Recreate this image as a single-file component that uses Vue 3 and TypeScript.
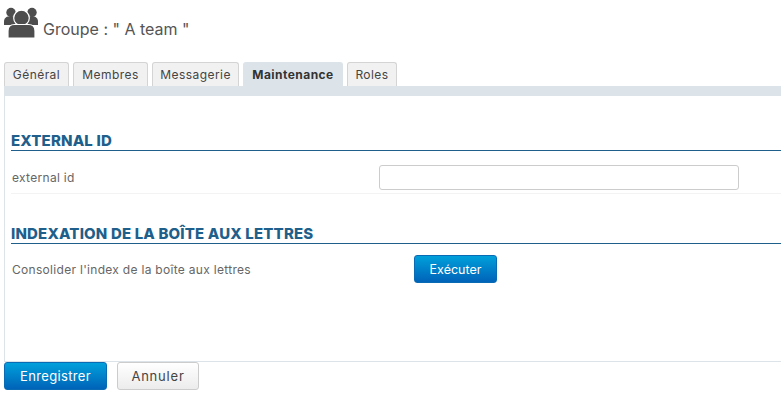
<script setup lang="ts">
const tabs = [
  { label: 'Général', width: 65 },
  { label: 'Membres', width: 75 },
  { label: 'Messagerie', width: 87 },
  { label: 'Maintenance', width: 100, active: true },
  { label: 'Roles', width: 50 }
]
</script>

<template>
  <div class="page">
    <header class="title">
      <svg class="icon" width="34" height="31" viewBox="0 0 34 31" fill="#4d4d4d">
        <circle cx="7" cy="5.500" r="4.700" />
        <circle cx="28" cy="5.500" r="4.700" />
        <path d="M0 18v-3.500c0-3 2-5 5-5h5c3 0 5 2 5 5V18z" />
        <path d="M20 18v-3.500c0-3 2-5 5-5h4c3 0 5 2 5 5V18z" />
        <circle cx="17.500" cy="11" r="7.800" stroke="#fff" stroke-width="1.200" />
        <path d="M4 31V24c0-4 2.500-6.500 6.500-6.500h14c4 0 6.500 2.500 6.500 6.500v7z" stroke="#fff" stroke-width="1.200" />
      </svg>
      <span>Groupe : " A team "</span>
    </header>

    <nav class="tabs">
      <a
        v-for="tab in tabs"
        :key="tab.label"
        class="tab"
        :class="{ active: tab.active }"
        :style="{ width: tab.width + 'px' }"
      >{{ tab.label }}</a>
    </nav>
    <div class="tab-bar"></div>

    <main class="content">
      <section class="first">
        <h2>EXTERNAL ID</h2>
        <div class="row bordered">
          <label>external id</label>
          <input type="text" />
        </div>
      </section>
      <section class="second">
        <h2>INDEXATION DE LA BOÎTE AUX LETTRES</h2>
        <div class="row">
          <label>Consolider l'index de la boîte aux lettres</label>
          <button class="btn primary run">Exécuter</button>
        </div>
      </section>
    </main>

    <footer class="actions">
      <button class="btn primary save">Enregistrer</button>
      <button class="btn cancel">Annuler</button>
    </footer>
  </div>
</template>

<style>
html,
body {
  margin: 0;
  background: #fff;
}
</style>

<style scoped>
.page {
  width: 781px;
  height: 401px;
  overflow: hidden;
  box-sizing: border-box;
  padding: 7px 0 0 4px;
  font-family: Inter, "Open Sans", sans-serif;
  font-size: 12px;
  letter-spacing: 0.3px;
  color: #444;
}

.title {
  display: flex;
  align-items: flex-end;
  gap: 5px;
  height: 31px;
  font-size: 16px;
  letter-spacing: 0;
  color: #555;
}

.title span {
  line-height: 22px;
  margin-bottom: -2px;
}

.tabs {
  display: flex;
  gap: 4px;
  margin-top: 24px;
  height: 24px;
}

.tab {
  box-sizing: border-box;
  height: 24px;
  line-height: 23px;
  text-align: center;
  background: #f1f1f1;
  border: 1px solid #d4d4d4;
  border-bottom: 0;
  border-radius: 3px 3px 0 0;
  color: #444;
  letter-spacing: 0.45px;
}

.tab.active {
  background: #dce4ea;
  border-color: #dce4ea;
  font-weight: 700;
  color: #333;
}

.tab-bar {
  height: 10px;
  background: #dce4ea;
}

.content {
  box-sizing: border-box;
  height: 266px;
  border-left: 1px solid #dce4ea;
  border-bottom: 1px solid #dce4ea;
  padding-left: 6px;
}

.first {
  padding-top: 36px;
}

.second {
  padding-top: 31px;
}

h2 {
  margin: 0;
  height: 18px;
  line-height: 18px;
  font-size: 15px;
  font-weight: 800;
  letter-spacing: 0.16px;
  color: #1f5f8b;
  border-bottom: 1px solid #1f5f8b;
}

.row {
  display: flex;
  align-items: center;
  padding: 14px 0 3px 1px;
  height: 25px;
}

.second .row {
  padding-top: 11px;
  height: 28px;
}

.row.bordered {
  border-bottom: 1px solid #f3f3f3;
}

label {
  width: 367px;
  flex: none;
  color: #666;
}

input {
  box-sizing: border-box;
  width: 360px;
  height: 25px;
  background: #fff;
  border: 1px solid #ccc;
  border-radius: 3px;
  padding: 0;
  margin: 0;
}

.btn {
  box-sizing: border-box;
  height: 28px;
  padding: 0;
  margin: 0;
  font-family: inherit;
  font-size: 13px;
  border-radius: 3px;
}

.btn.primary {
  background: linear-gradient(#00a0db, #0063b8);
  border: 1px solid #0a6bb5;
  color: #fff;
}

.run {
  width: 83px;
  margin-left: 35px;
  font-size: 12.500px;
  letter-spacing: 0;
}

.actions {
  display: flex;
  gap: 10px;
  margin-top: 0;
}

.save {
  width: 103px;
  letter-spacing: 0.35px;
}

.cancel {
  width: 82px;
  background: linear-gradient(#fff, #ececec);
  border: 1px solid #ccc;
  color: #444;
  letter-spacing: 0.8px;
}
</style>
